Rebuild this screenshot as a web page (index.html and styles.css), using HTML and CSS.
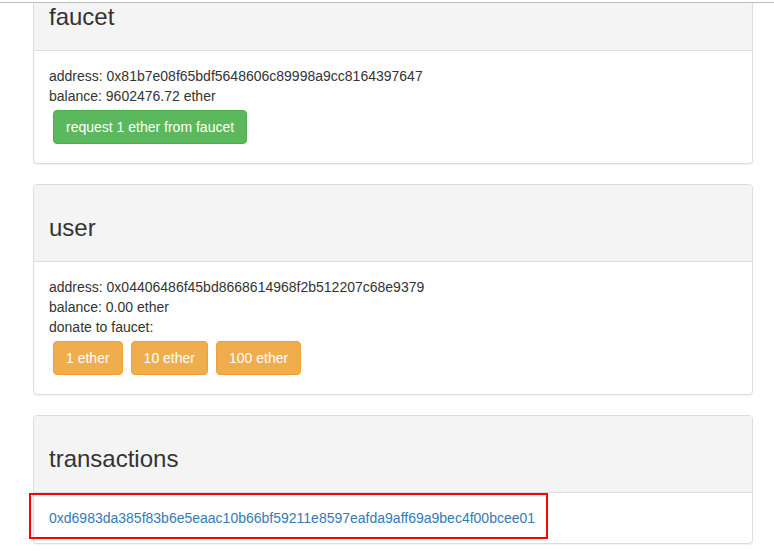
FILE: index.html
```html
<html>
<head>
<meta charset="utf-8">
<link rel="stylesheet" href="styles.css">
</head>
<body>
<div class="topline"></div>
<div class="container">
    <div class="panel panel-cut">
        <div class="panel-heading">
            <h3>faucet</h3>
        </div>
        <div class="panel-body">
            <div>address: 0x81b7e08f65bdf5648606c89998a9cc8164397647</div>
            <div>balance: 9602476.72 ether</div>
            <div class="btn btn-success">request 1 ether from faucet</div>
        </div>
    </div>
    <div class="panel">
        <div class="panel-heading">
            <h3>user</h3>
        </div>
        <div class="panel-body">
            <div>address: 0x04406486f45bd8668614968f2b512207c68e9379</div>
            <div>balance: 0.00 ether</div>
            <div>donate to faucet:</div>
            <div class="btn btn-warning">1 ether</div><div class="btn btn-warning">10 ether</div><div class="btn btn-warning">100 ether</div>
        </div>
    </div>
    <div class="panel">
        <div class="panel-heading">
            <h3>transactions</h3>
        </div>
        <div class="panel-body tx">
            <a href="#">0xd6983da385f83b6e5eaac10b66bf59211e8597eafda9aff69a9bec4f00bcee01</a>
            <span class="mark"></span>
        </div>
    </div>
</div>
</body>
</html>
```

FILE: styles.css
```css
body {
    margin: 0;
    font-family: "Liberation Sans", Arial, sans-serif;
    font-size: 14px;
    line-height: 20px;
    color: #333;
    background: #fff;
}
.topline {
    height: 2px;
    border-bottom: 1px solid #bcbcbc;
}
.container {
    width: 720px;
    margin: 0 33px;
}
.panel {
    border: 1px solid #ddd;
    border-radius: 4px;
    margin-bottom: 20px;
    background: #fff;
    box-shadow: 0 1px 1px rgba(0,0,0,.05);
}
.panel-cut {
    border-top: none;
    border-top-left-radius: 0;
    border-top-right-radius: 0;
}
.panel-heading {
    background-color: #f4f4f4;
    border-bottom: 1px solid #ddd;
    padding: 10px 15px;
    border-top-left-radius: 3px;
    border-top-right-radius: 3px;
}
.panel-cut .panel-heading {
    padding-top: 1px;
}
.panel-heading h3 {
    margin: 20px 0 10px 0;
    font-size: 24px;
    font-weight: 500;
    line-height: 26px;
}
.panel-cut .panel-heading h3 {
    margin-top: 0;
}
.panel-body {
    padding: 15px;
}
.btn {
    display: inline-block;
    margin: 4px;
    padding: 6px 12px;
    border: 1px solid transparent;
    border-radius: 4px;
    color: #fff;
    user-select: none;
}
.btn-success {
    background-color: #5cb85c;
    border-color: #4cae4c;
}
.btn-warning {
    background-color: #f0ad4e;
    border-color: #eea236;
}
.tx {
    position: relative;
}
.tx a {
    color: #337ab7;
    text-decoration: none;
}
.mark {
    position: absolute;
    left: -5px;
    top: 0;
    width: 515px;
    height: 42px;
    border: 2px solid #f00;
}
```
